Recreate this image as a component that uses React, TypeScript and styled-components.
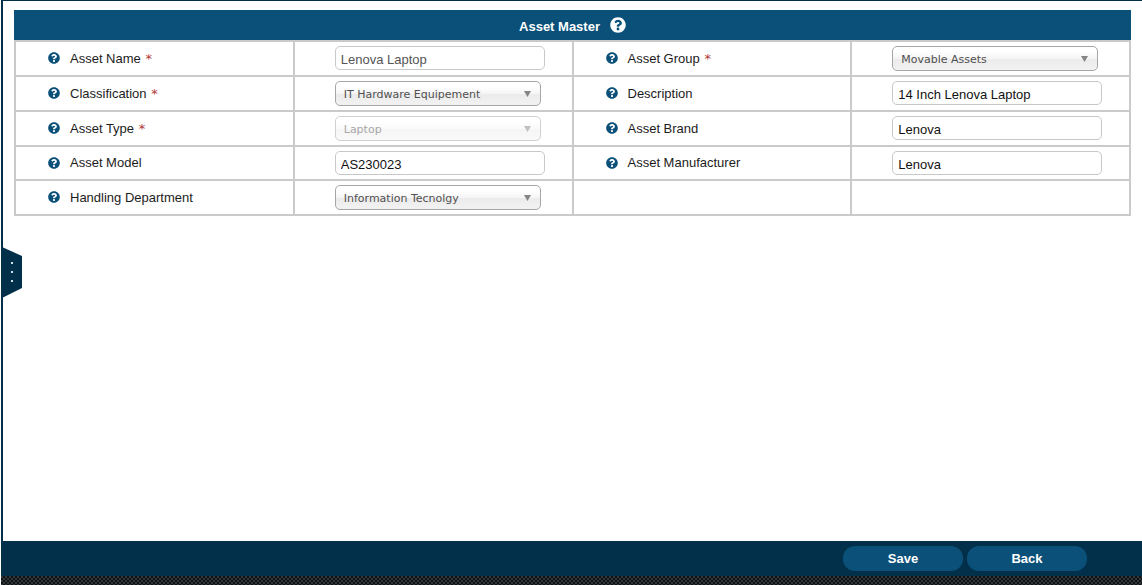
import React from 'react';
import styled, { createGlobalStyle, css } from 'styled-components';
import { FaQuestionCircle } from 'react-icons/fa';

const navy = '#02304a';
const blue = '#0a5079';
const line = '#cacaca';

const GlobalStyle = createGlobalStyle`
  *, *::before, *::after { box-sizing: border-box; }
  body {
    margin: 0;
    background: #fff;
    font-family: 'Liberation Sans', Arial, sans-serif;
    font-size: 13px;
    color: #1c1c1c;
  }
`;

const Page = styled.form`
  position: relative;
  display: flex;
  flex-direction: column;
  min-height: 100vh;
  padding-left: 1px;
`;

const Content = styled.main`
  flex: 1;
  padding: 9px 11px 24px;
  border-top: 1px solid ${navy};
  border-left: 2px solid ${navy};
`;

const TitleBar = styled.header`
  display: flex;
  align-items: center;
  justify-content: center;
  gap: 10px;
  height: 30px;
  background: ${blue};
  color: #fff;
`;

const Title = styled.h1`
  margin: 0;
  padding-top: 4px;
  font-size: 13px;
  line-height: 16px;
  font-weight: bold;
`;

const HelpButton = styled.button<{ $large?: boolean }>`
  display: flex;
  flex: none;
  padding: 0;
  border: 0;
  background: none;
  color: ${(p) => (p.$large ? '#fff' : blue)};
  font-size: ${(p) => (p.$large ? 16 : 12)}px;
  cursor: pointer;
`;

const FieldGrid = styled.div`
  display: grid;
  grid-template-columns: repeat(4, minmax(0, 1fr));
  grid-template-rows: repeat(3, 33px) 32px 33px;
  gap: 2px;
  padding: 2px;
  background: ${line};
`;

const LabelCell = styled.div`
  display: flex;
  align-items: center;
  gap: 10px;
  padding: 0 0 1px 32px;
  background: #fff;
`;

const Label = styled.label`
  padding-top: 1px;
  font-size: 13px;
  line-height: 16px;
`;

const Required = styled.span`
  margin-left: 1px;
  color: #b03a36;
  font-family: 'DejaVu Sans', Verdana, sans-serif;
  line-height: 1;
`;

const control = css`
  display: block;
  border-radius: 5px;
  margin: 0;
  outline: none;
`;

const ValueCell = styled.div`
  padding: 4px 0 0 40px;
  background: #fff;
`;

const TextInput = styled.input`
  ${control}
  width: 210px;
  max-width: 100%;
  height: 24px;
  padding: 3px 5px 0;
  border: 1px solid #c8c8c8;
  background: #fff;
  color: #111;
  font: 13px 'Liberation Sans', Arial, sans-serif;

  &:disabled {
    color: #555;
  }
`;

const SelectWrap = styled.div`
  position: relative;
  width: 206px;
  max-width: 100%;
`;

const Select = styled.select`
  ${control}
  appearance: none;
  width: 100%;
  height: 25px;
  padding: 2px 24px 0 8px;
  border: 1px solid #a6a6a6;
  background: linear-gradient(#fff 20%, #f5f5f5 50%, #ebebeb 52%, #f2f2f2 100%);
  color: #505050;
  font: 11px 'DejaVu Sans', Verdana, sans-serif;

  &:disabled {
    border-color: #d0d0d0;
    background: linear-gradient(#fff 20%, #fafafa 50%, #f5f5f5 52%, #f9f9f9 100%);
    color: #a8a8a8;
    opacity: 1;
  }
`;

const Arrow = styled.svg<{ $muted?: boolean }>`
  position: absolute;
  top: 10px;
  right: 10px;
  width: 7px;
  height: 6px;
  fill: ${(p) => (p.$muted ? '#c0c0c0' : '#858585')};
  pointer-events: none;
`;

const DrawerHandle = styled.button`
  position: absolute;
  top: 247px;
  left: 2px;
  display: flex;
  padding: 0;
  border: 0;
  background: none;
  cursor: pointer;
`;

const ActionBar = styled.footer`
  display: flex;
  justify-content: flex-end;
  gap: 4px;
  padding: 5px 55px 5px 0;
  background: ${navy};
`;

const ActionButton = styled.button`
  width: 120px;
  height: 25px;
  padding: 0;
  border: 0;
  border-radius: 12px;
  background: ${blue};
  color: #fff;
  font: bold 13px 'Liberation Sans', Arial, sans-serif;
  cursor: pointer;
`;

const BottomStrip = styled.div`
  height: 9px;
  background: repeating-conic-gradient(#0f1214 0 25%, #33373a 0 50%) 0 0 / 4px 4px;
`;

interface Field {
  id: string;
  label: string;
  value: string;
  kind: 'text' | 'select';
  required?: boolean;
  disabled?: boolean;
}

const fields: (Field | null)[] = [
  { id: 'name', label: 'Asset Name', value: 'Lenova Laptop', kind: 'text', required: true, disabled: true },
  { id: 'group', label: 'Asset Group', value: 'Movable Assets', kind: 'select', required: true },
  { id: 'classification', label: 'Classification', value: 'IT Hardware Equipement', kind: 'select', required: true },
  { id: 'description', label: 'Description', value: '14 Inch Lenova Laptop', kind: 'text' },
  { id: 'type', label: 'Asset Type', value: 'Laptop', kind: 'select', required: true, disabled: true },
  { id: 'brand', label: 'Asset Brand', value: 'Lenova', kind: 'text' },
  { id: 'model', label: 'Asset Model', value: 'AS230023', kind: 'text' },
  { id: 'manufacturer', label: 'Asset Manufacturer', value: 'Lenova', kind: 'text' },
  { id: 'department', label: 'Handling Department', value: 'Information Tecnolgy', kind: 'select' },
  null,
];

function FieldCells({ field }: { field: Field | null }) {
  if (!field) {
    return (
      <>
        <LabelCell />
        <ValueCell />
      </>
    );
  }
  const { id, label, value, kind, required, disabled } = field;
  return (
    <>
      <LabelCell>
        <HelpButton type="button" aria-label={`Help: ${label}`}>
          <FaQuestionCircle />
        </HelpButton>
        <Label htmlFor={id}>
          {label} {required && <Required>*</Required>}
        </Label>
      </LabelCell>
      <ValueCell>
        {kind === 'text' ? (
          <TextInput id={id} type="text" defaultValue={value} disabled={disabled} />
        ) : (
          <SelectWrap>
            <Select id={id} defaultValue={value} disabled={disabled}>
              <option>{value}</option>
            </Select>
            <Arrow $muted={disabled} viewBox="0 0 7 6" aria-hidden="true">
              <path d="M0 0h7L3.5 6z" />
            </Arrow>
          </SelectWrap>
        )}
      </ValueCell>
    </>
  );
}

export default function App() {
  return (
    <>
      <GlobalStyle />
      <Page onSubmit={(e) => e.preventDefault()}>
        <Content>
          <TitleBar>
            <Title>Asset Master</Title>
            <HelpButton type="button" $large aria-label="Help: Asset Master">
              <FaQuestionCircle />
            </HelpButton>
          </TitleBar>
          <FieldGrid>
            {fields.map((field, i) => (
              <FieldCells key={field ? field.id : i} field={field} />
            ))}
          </FieldGrid>
        </Content>
        <DrawerHandle type="button" aria-label="Open side panel">
          <svg width="20" height="51" viewBox="0 0 20 51" aria-hidden="true">
            <path d="M0 0l20 9v32L0 51z" fill={navy} />
            <path d="M9 15h2v2H9zM9 24h2v2H9zM9 33h2v2H9z" fill="#cfe3ee" />
          </svg>
        </DrawerHandle>
        <ActionBar>
          <ActionButton type="submit">Save</ActionButton>
          <ActionButton type="button">Back</ActionButton>
        </ActionBar>
        <BottomStrip />
      </Page>
    </>
  );
}
